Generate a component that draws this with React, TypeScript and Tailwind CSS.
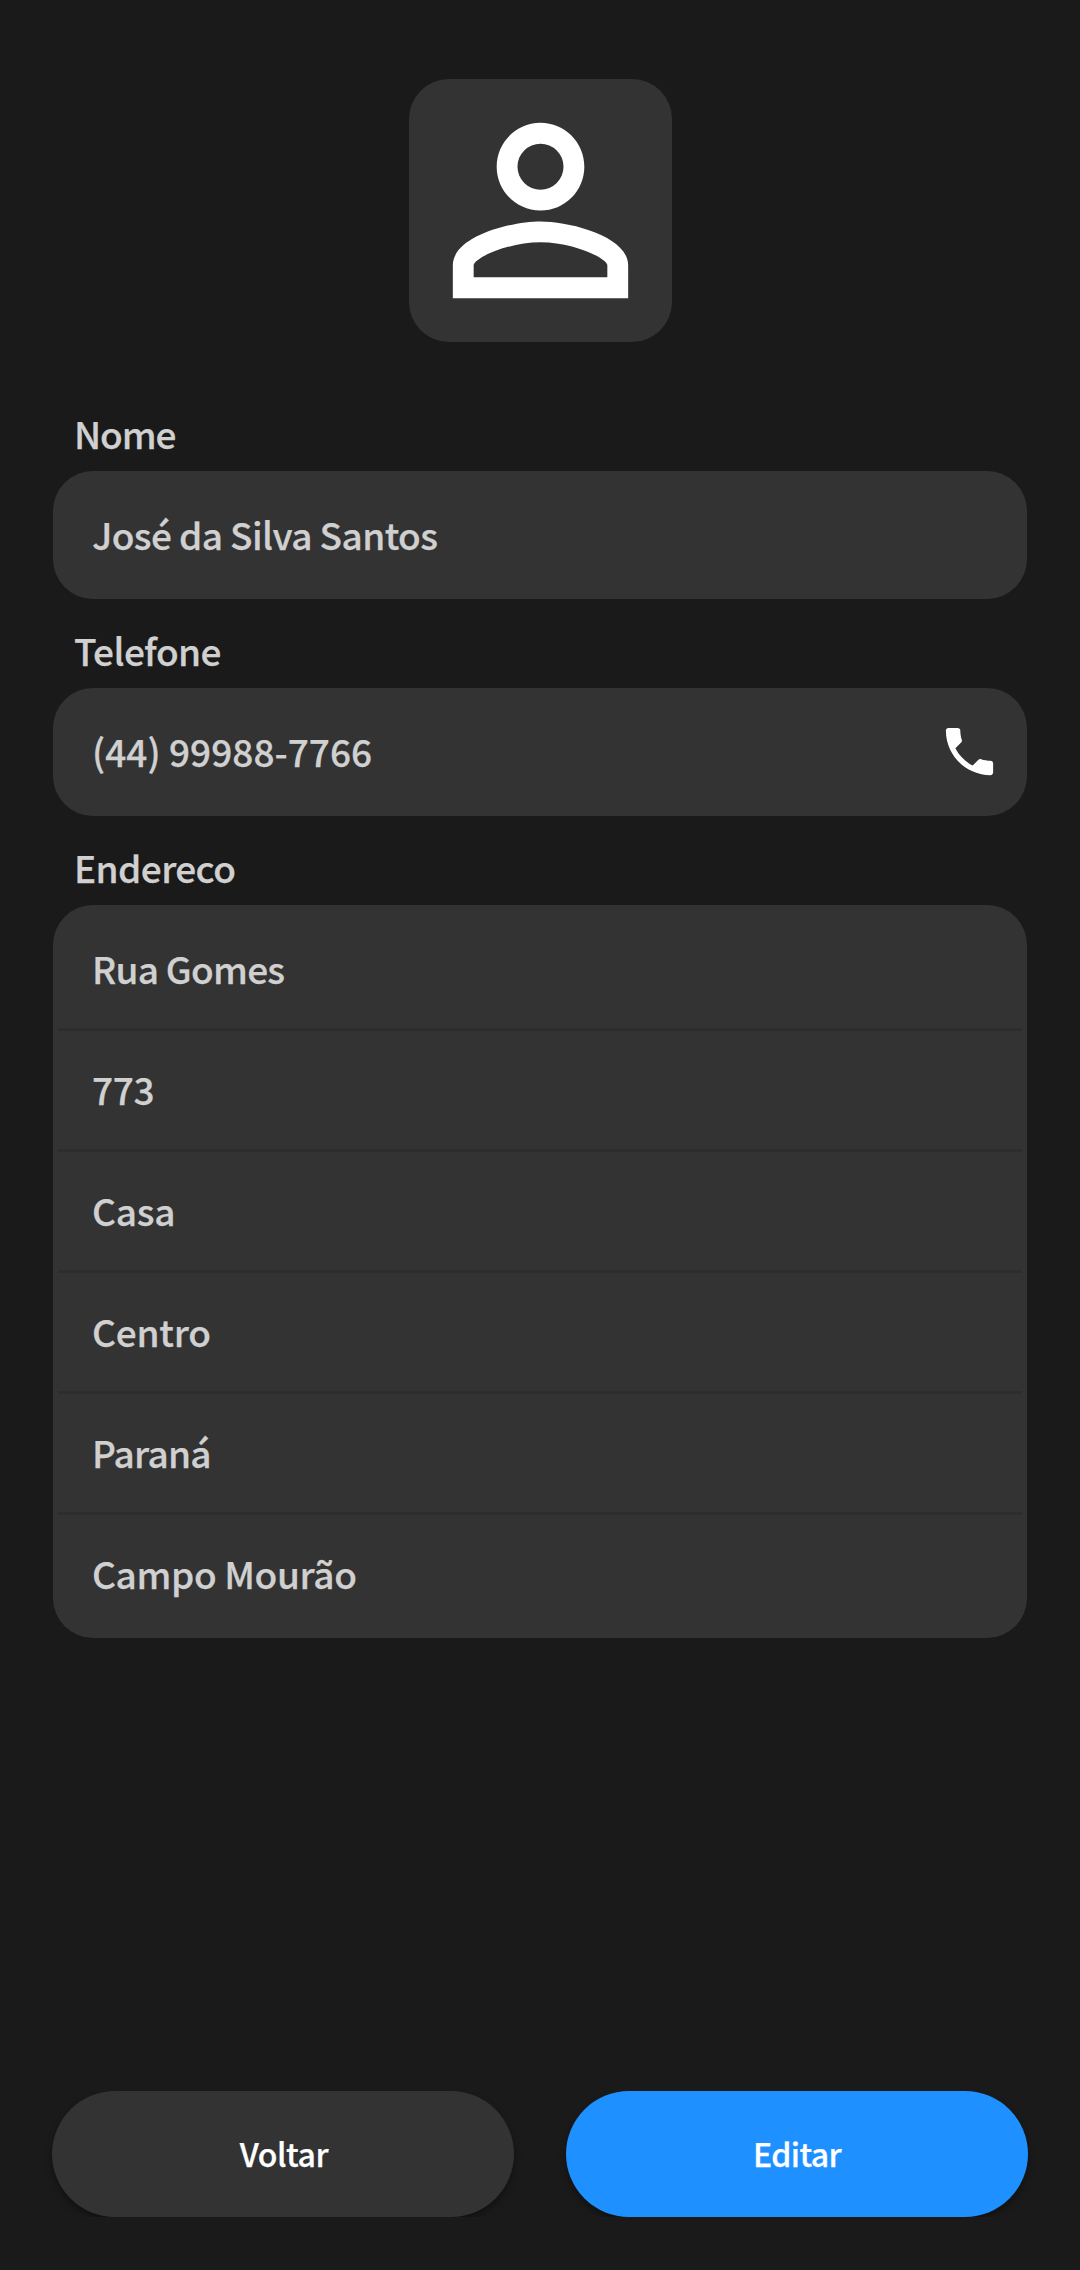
import type { ReactNode } from 'react';

function Label({ children, className }: { children: ReactNode; className: string }) {
  return (
    <h2 className={`mb-[11px] pl-[21px] text-[37px] leading-[54px] font-medium text-[#d0d0d0] ${className}`}>
      {children}
    </h2>
  );
}

function Value({ children, className }: { children: ReactNode; className: string }) {
  return (
    <span className={`text-[37px] leading-[54px] font-medium whitespace-nowrap text-[#d0d0d0] ${className}`}>
      {children}
    </span>
  );
}

const address = [
  { text: 'Rua Gomes', className: 'tracking-[-0.75px]' },
  { text: '773', className: 'tracking-[-0.4px]' },
  { text: 'Casa', className: 'tracking-[-0.2px]' },
  { text: 'Centro', className: 'tracking-[-0.2px]' },
  { text: 'Paraná', className: 'tracking-[-0.75px]' },
  { text: 'Campo Mourão', className: 'tracking-[-0.37px]' },
];

export default function App() {
  return (
    <main className="flex h-[2270px] w-[1080px] flex-col bg-[#1a1a1a] pt-[79px] pb-[53px] font-['Noto_Sans_CJK_SC',sans-serif] [-webkit-text-stroke:0.25px_currentColor]">
      <div className="mx-auto flex size-[263px] shrink-0 items-center justify-center rounded-[40px] bg-[#333333]">
        <svg viewBox="0 0 24 24" className="size-[263px] fill-white" aria-hidden="true">
          <path d="M12 5.9a2.1 2.1 0 1 1 0 4.2 2.1 2.1 0 0 1 0-4.2m0 9c2.97 0 6.1 1.46 6.1 2.1v1.1H5.9V17c0-.64 3.13-2.1 6.1-2.1M12 4C9.79 4 8 5.79 8 8s1.79 4 4 4 4-1.79 4-4-1.79-4-4-4zm0 9c-2.67 0-8 1.34-8 4v3h16v-3c0-2.66-5.33-4-8-4z" />
        </svg>
      </div>

      <div className="mx-[53px] mt-16 flex flex-col gap-6">
        <section>
          <Label className="tracking-[-1.1px]">Nome</Label>
          <div className="flex h-32 items-center rounded-[40px] bg-[#333333] pb-0.5 pl-[39px]">
            <Value className="tracking-[-0.6px]">José da Silva Santos</Value>
          </div>
        </section>

        <section>
          <Label className="tracking-[-0.6px]">Telefone</Label>
          <div className="flex h-32 items-center justify-between rounded-[40px] bg-[#333333] pr-[26px] pb-0.5 pl-[39px]">
            <Value className="tracking-[0.02px]">(44) 99988-7766</Value>
            <button aria-label="Ligar">
              <svg viewBox="0 0 24 24" className="size-[63px] fill-white" aria-hidden="true">
                <path d="M20 15.5c-1.25 0-2.45-.2-3.57-.57-.35-.11-.74-.03-1.02.24l-2.2 2.2c-2.83-1.44-5.15-3.75-6.59-6.59l2.2-2.21c.28-.26.36-.65.25-1C8.7 6.45 8.5 5.25 8.5 4c0-.55-.45-1-1-1H4c-.55 0-1 .45-1 1 0 9.39 7.61 17 17 17 .55 0 1-.45 1-1v-3.5c0-.55-.45-1-1-1z" />
              </svg>
            </button>
          </div>
        </section>

        <section>
          <Label className="tracking-[-0.6px]">Endereco</Label>
          <ul className="divide-y-[3px] divide-[#2d2d2d] rounded-[40px] bg-[#333333] p-[5px]">
            {address.map(({ text, className }) => (
              <li key={text} className="box-content flex h-[118px] items-center">
                <span className="flex pb-0.5 pl-[34px]">
                  <Value className={className}>{text}</Value>
                </span>
              </li>
            ))}
          </ul>
        </section>
      </div>

      <div className="mx-[52px] mt-auto grid grid-cols-2 gap-[52px] text-[32px] leading-[48px] font-medium text-white">
        <button className="h-[126px] rounded-full bg-[#333333] pb-0.5 pl-0.5 tracking-[-0.4px] shadow-[0_4px_7px_rgba(0,0,0,0.35)] [clip-path:inset(0_-12px_0_-12px)]">
          Voltar
        </button>
        <button className="h-[126px] rounded-full bg-[#1e90ff] pb-0.5 tracking-[-0.6px] shadow-[0_4px_7px_rgba(0,0,0,0.35)] [clip-path:inset(0_-12px_0_-12px)]">
          Editar
        </button>
      </div>
    </main>
  );
}
